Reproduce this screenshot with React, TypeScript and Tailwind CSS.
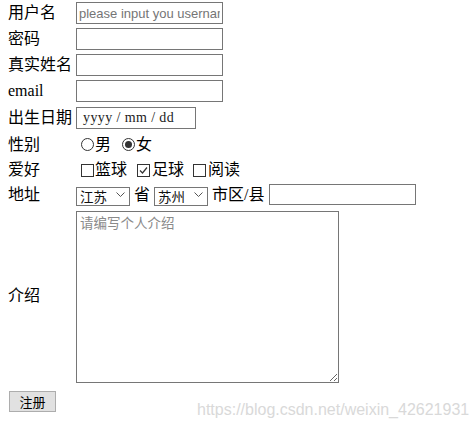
import React from "react";

const labelFont = { fontFamily: '"Liberation Serif", "Noto Sans CJK SC", serif' };

function Radio({ checked }: { checked?: boolean }) {
  return (
    <span className="flex h-[13px] w-[13px] shrink-0 items-center justify-center rounded-full border border-[#333]">
      {checked && <span className="h-[7px] w-[7px] rounded-full bg-[#333]" />}
    </span>
  );
}

function Checkbox({ checked }: { checked?: boolean }) {
  return (
    <span className="flex h-[13px] w-[13px] shrink-0 items-center justify-center border border-[#333]">
      {checked && (
        <svg width="9" height="9" viewBox="0 0 9 9" fill="none">
          <path d="M1 4.5 L3.5 7 L8 1.5" stroke="#333" strokeWidth="1.2" />
        </svg>
      )}
    </span>
  );
}

function Select({ options }: { options: string[] }) {
  return (
    <div className="relative h-[19px] w-[54px]">
      <select
        defaultValue={options[0]}
        className="h-full w-full appearance-none rounded-none border border-[#767676] bg-white pl-[3px] text-[13.5px] leading-none text-[#111] outline-none"
        style={{ fontFamily: '"Noto Sans CJK SC", sans-serif' }}
      >
        {options.map((o) => (
          <option key={o}>{o}</option>
        ))}
      </select>
      <svg
        className="pointer-events-none absolute right-[5px] top-[7px]"
        width="9"
        height="5"
        viewBox="0 0 9 5"
        fill="none"
      >
        <path d="M0.5 0.5 L4.5 4.5 L8.5 0.5" stroke="#555" strokeWidth="1" />
      </svg>
    </div>
  );
}

function Row({ label, h, children }: { label: string; h: string; children: React.ReactNode }) {
  return (
    <div className={`flex items-center ${h}`}>
      <div className="w-[68px] shrink-0 leading-none">{label}</div>
      <div className="flex items-center">{children}</div>
    </div>
  );
}

const textInput =
  "h-[22px] w-[147px] border border-[#767676] bg-white px-[2px] text-[13px] leading-none text-[#111] outline-none placeholder:text-[#757575]";

export default function App() {
  return (
    <div className="relative min-h-[431px] bg-white pl-2 text-[16px] text-black" style={labelFont}>
      <Row label="用户名" h="h-[26px]">
        <input
          className={textInput}
          placeholder="please input you username"
          style={{ fontFamily: '"Liberation Sans", sans-serif' }}
        />
      </Row>
      <Row label="密码" h="h-[26px]">
        <input type="password" className={textInput} />
      </Row>
      <Row label="真实姓名" h="h-[26px]">
        <input className={textInput} />
      </Row>
      <Row label="email" h="h-[26px]">
        <input className={textInput} />
      </Row>
      <Row label="出生日期" h="h-[28px]">
        <div className="flex h-[22px] w-[120px] items-center border border-[#767676] pl-[6px] text-[14px] leading-none tracking-[0.4px] text-[#222]">
          yyyy / mm / dd
        </div>
      </Row>
      <Row label="性别" h="h-[25px]">
        <span className="ml-[5px]">
          <Radio />
        </span>
        <span className="ml-[1px] leading-none">男</span>
        <span className="ml-[11px]">
          <Radio checked />
        </span>
        <span className="ml-[1px] leading-none">女</span>
      </Row>
      <Row label="爱好" h="h-[26px]">
        <span className="ml-[5px]">
          <Checkbox />
        </span>
        <span className="ml-[1px] leading-none">篮球</span>
        <span className="ml-[10px]">
          <Checkbox checked />
        </span>
        <span className="ml-[2px] leading-none">足球</span>
        <span className="ml-[9px]">
          <Checkbox />
        </span>
        <span className="ml-[2px] leading-none">阅读</span>
      </Row>
      <Row label="地址" h="h-[23px]">
        <Select options={["江苏", "浙江", "安徽"]} />
        <span className="mx-[4px] leading-none">省</span>
        <Select options={["苏州", "南京", "无锡"]} />
        <span className="ml-[4px] mr-[5px] leading-none">市区/县</span>
        <input className="h-[21px] w-[147px] border border-[#767676] bg-white px-[2px] text-[13px] outline-none" />
      </Row>
      <Row label="介绍" h="h-[180px]">
        <textarea
          className="mt-[2px] h-[172px] w-[263px] border border-[#767676] px-[3px] py-[2px] text-[13.5px] leading-[17px] text-[#111] outline-none placeholder:text-[#8a8a8a]"
          placeholder="请编写个人介绍"
          style={{ fontFamily: '"Noto Sans CJK SC", sans-serif' }}
        />
      </Row>
      <div className="pt-[4px]">
        <button
          className="ml-px h-[21px] w-[47px] border border-[#adadad] bg-[#e1e1e1] text-[13px] leading-none text-black"
          style={{ fontFamily: '"Noto Sans CJK SC", sans-serif' }}
        >
          注册
        </button>
      </div>
      <div
        className="pointer-events-none absolute left-[197px] top-[402px] text-[16px] leading-none text-[#d9d9d9]"
        style={{ fontFamily: '"Liberation Sans", sans-serif' }}
      >
        https://blog.csdn.net/weixin_42621931
      </div>
    </div>
  );
}
